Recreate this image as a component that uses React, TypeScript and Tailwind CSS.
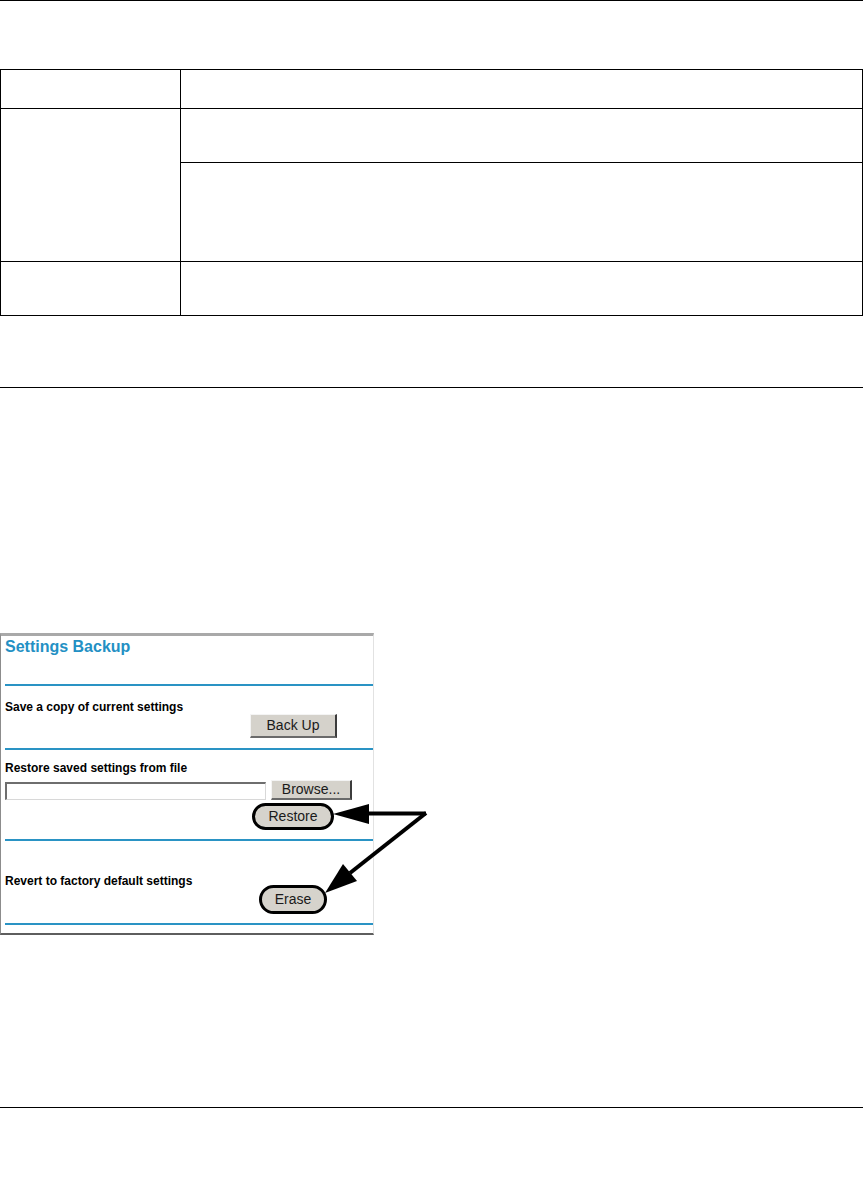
import React from "react";

function Btn({ children, className }: { children: React.ReactNode; className: string }) {
  return (
    <div
      className={
        "flex items-center justify-center bg-[#d5d2cb] text-[#1a1a1a] text-[14px] border-t border-l border-t-[#f4f4f4] border-l-[#f4f4f4] border-r-2 border-b-2 border-r-[#3c3c3c] border-b-[#6a6a6a] " +
        className
      }
    >
      {children}
    </div>
  );
}

function Pill({ children, className }: { children: React.ReactNode; className: string }) {
  return (
    <div
      className={
        "flex items-center justify-center rounded-full border-[3px] border-black bg-[#d6d3cc] text-[#1a1a1a] text-[14px] " +
        className
      }
    >
      {children}
    </div>
  );
}

export default function App() {
  return (
    <div
      className="relative w-[865px] h-[1184px] bg-white overflow-hidden"
      style={{ fontFamily: '"Liberation Sans", Arial, sans-serif' }}
    >
      <div className="h-px w-[863px] bg-black" />

      <div className="mt-[68px] grid grid-cols-[180px_1fr] w-[863px] border border-black">
        <div className="h-[39px] border-r border-b border-black" />
        <div className="h-[39px] border-b border-black" />
        <div className="row-span-2 border-r border-b border-black" />
        <div className="h-[54px] border-b border-black" />
        <div className="h-[99px] border-b border-black" />
        <div className="h-[53px] border-r border-black" />
        <div className="h-[53px]" />
      </div>

      <div className="mt-[71px] h-px w-[863px] bg-black" />

      <div className="mt-[245px] w-[374px] border-t-[3px] border-t-[#a9a9a9] border-l border-l-[#8c8c8c] border-r border-r-[#e2e2e2] border-b-2 border-b-[#5e5e5e]">
        <div className="pl-[4px] flex flex-col">
          <div className="pt-[2px] text-[16px] leading-[18px] font-bold text-[#2390c4]">Settings Backup</div>
          <div className="mt-[28px] h-[2px] bg-[#2a93c4]" />
          <div className="mt-[14px] text-[12px] leading-[14px] font-bold text-black">Save a copy of current settings</div>
          <Btn className="ml-[245px] w-[87px] h-[24px]">Back Up</Btn>
          <div className="mt-[10px] h-[2px] bg-[#2a93c4]" />
          <div className="mt-[11px] text-[12px] leading-[14px] font-bold text-black">Restore saved settings from file</div>
          <div className="mt-[5px] flex items-end">
            <div className="w-[261px] h-[18px] bg-white border-t-2 border-l-2 border-t-[#6e6e6e] border-l-[#6e6e6e] border-b border-r border-b-[#d8d8d8] border-r-[#d8d8d8]" />
            <Btn className="ml-[5px] w-[81px] h-[20px]">Browse...</Btn>
          </div>
          <Pill className="mt-[3px] ml-[247px] w-[82px] h-[27px]">Restore</Pill>
          <div className="mt-[9px] h-[2px] bg-[#2a93c4]" />
          <div className="mt-[33px] text-[12px] leading-[14px] font-bold text-black">Revert to factory default settings</div>
          <Pill className="-mt-[3px] ml-[254px] w-[68px] h-[29px]">Erase</Pill>
          <div className="mt-[9px] h-[2px] bg-[#2a93c4]" />
          <div className="h-[8px]" />
        </div>
      </div>

      <div className="mt-[172px] h-px w-[863px] bg-black" />

      <svg
        className="absolute left-0 top-0 pointer-events-none"
        width="865"
        height="1184"
        viewBox="0 0 865 1184"
      >
        <line x1="366" y1="813.5" x2="426" y2="813.5" stroke="black" strokeWidth="4" />
        <polygon points="333,814 369,804 369,824" fill="black" />
        <line x1="426" y1="813" x2="350" y2="873" stroke="black" strokeWidth="4" />
        <polygon points="325,893 357,881 343,864" fill="black" />
      </svg>
    </div>
  );
}
